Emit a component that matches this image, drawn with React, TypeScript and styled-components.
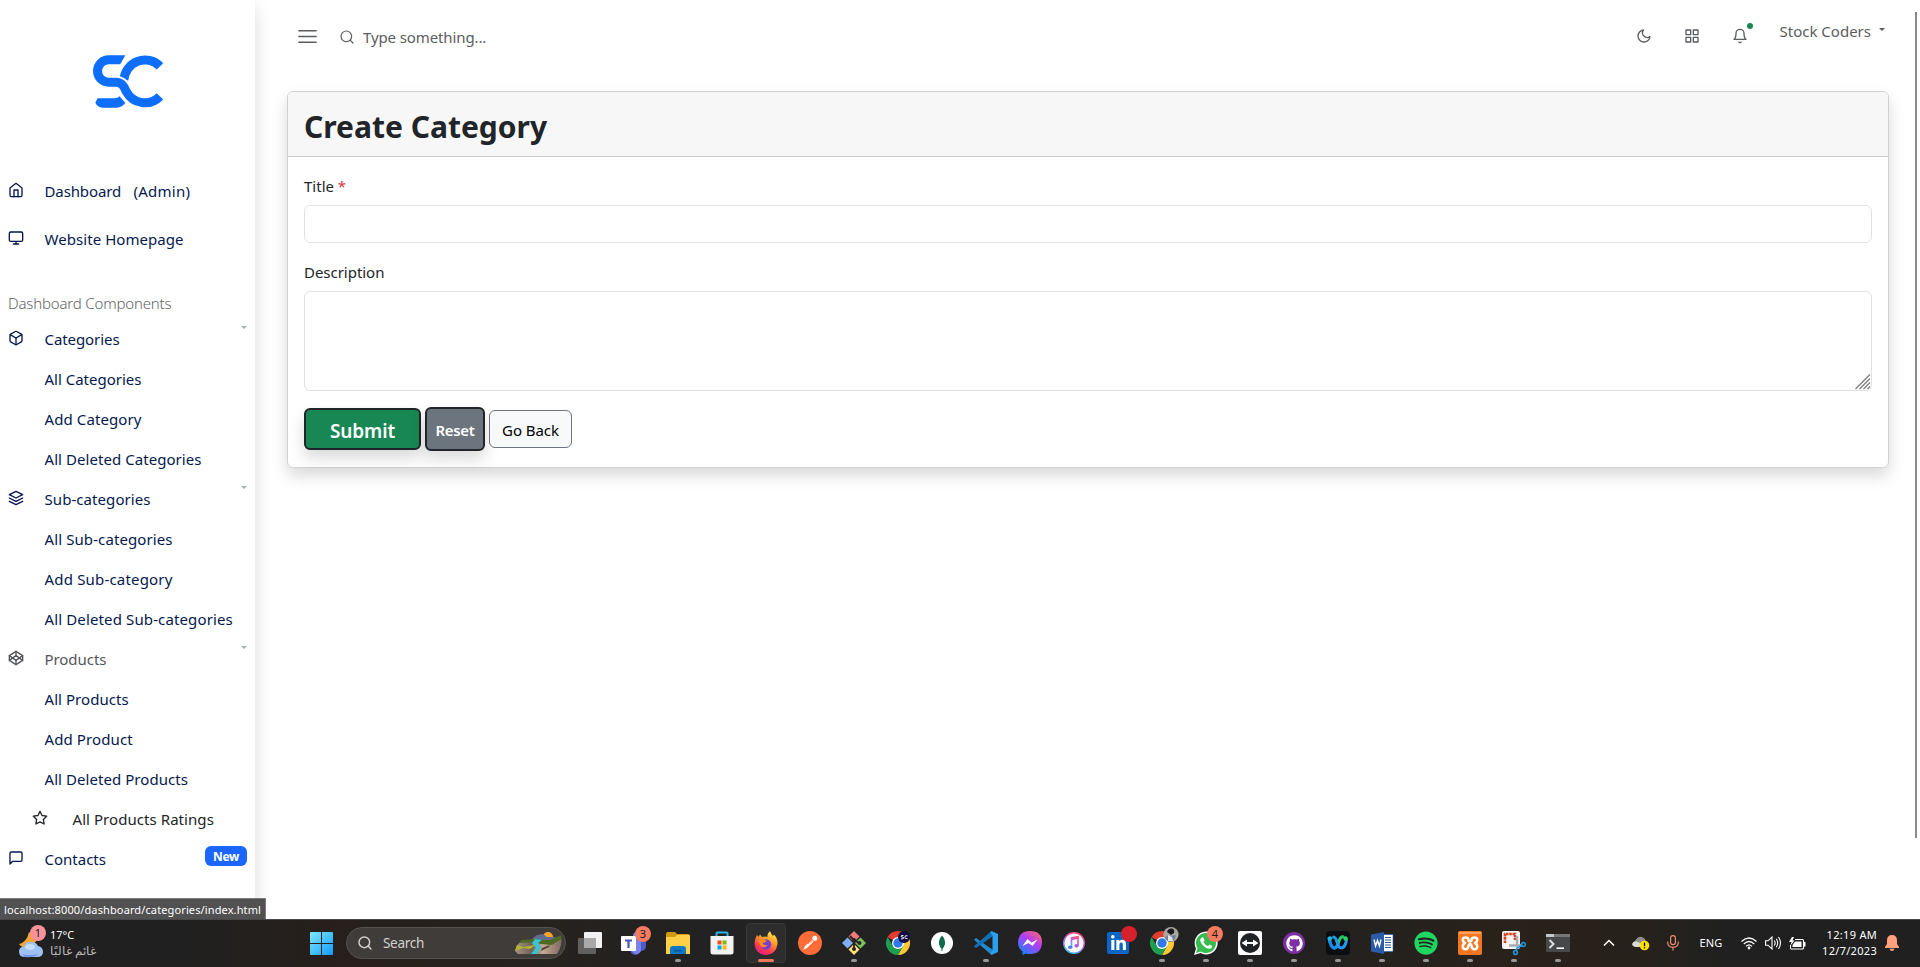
import React from 'react';
import styled, { createGlobalStyle, css } from 'styled-components';
import {
  FiBell, FiBox, FiCodepen, FiGrid, FiHome, FiLayers, FiMenu,
  FiMessageSquare, FiMonitor, FiMoon, FiSearch, FiStar,
} from 'react-icons/fi';
import { FaGithub, FaSpotify, FaLinkedinIn } from 'react-icons/fa';

const GlobalStyle = createGlobalStyle`
  * { box-sizing: border-box; }
  html, body { margin: 0; padding: 0; overflow: hidden; background: #fff; }
  body { font-family: "Noto Sans", "Open Sans", sans-serif; font-size: 15px; line-height: 24px; color: #212529; }
  button, input, textarea { font-family: inherit; margin: 0; }
  svg { display: block; flex: none; }
`;

/* ---------- page shell ---------- */

const Screen = styled.div`
  position: relative;
  display: flex;
  flex-direction: column;
  width: 1920px;
  height: 967px;
  overflow: hidden;
`;

const Page = styled.div`
  flex: 1;
  display: flex;
  min-height: 0;
  overflow: hidden;
`;

const Sidebar = styled.nav`
  width: 255px;
  flex: none;
  background: #fff;
  box-shadow: 0 8px 16px rgba(0, 0, 0, 0.15);
`;

const LogoBox = styled.div`
  height: 167px;
  padding: 54px 0 0 92px;
`;

const Text = styled.span<{ $ls?: number }>`
  letter-spacing: ${(p) => p.$ls ?? 0}px;
  white-space: pre;
`;

const NavRow = styled.a<{ $tall?: boolean; $tone?: 'muted' | 'dark'; $inset?: boolean }>`
  display: flex;
  align-items: center;
  height: ${(p) => (p.$tall ? 48 : 40)}px;
  padding-left: ${(p) => (p.$inset ? 32 : 8)}px;
  padding-right: 8px;
  color: ${(p) => (p.$tone === 'muted' ? '#55565a' : p.$tone === 'dark' ? '#222529' : '#05194f')};
  text-decoration: none;
`;

const NavIcon = styled.span<{ $wide?: boolean }>`
  width: ${(p) => (p.$wide ? 40.5 : 36.5)}px;
  flex: none;
  margin-top: -2px;
`;

const SectionLabel = styled.div`
  margin-top: 28px;
  height: 28px;
  padding-left: 8px;
  font-weight: 300;
  color: #5f6266;
`;

const Caret = styled.i<{ $color: string }>`
  display: block;
  border: 3px solid transparent;
  border-top-color: ${(p) => p.$color};
  border-bottom: 0;
`;

const RowCaret = styled(Caret)`
  align-self: flex-start;
  margin: 7px 0 0 auto;
`;

const NewBadge = styled.span`
  margin: -7px 0 0 auto;
  width: 42px;
  height: 20px;
  border-radius: 6px;
  background: #1a66ff;
  color: #fff;
  font-size: 12px;
  font-weight: 700;
  line-height: 21px;
  letter-spacing: -0.3px;
  text-align: center;
`;

const Main = styled.main`
  flex: 1;
  padding: 0 31px 0 32px;
`;

const TopBar = styled.header`
  display: flex;
  align-items: center;
  height: 73px;
  margin-bottom: 18px;
  padding: 0 4px 0 9px;
  color: #5a5d60;
`;

const SearchField = styled.label`
  display: flex;
  align-items: center;
  gap: 8px;
  margin-left: 20px;
  flex: 1;
`;

const TopActions = styled.div`
  display: flex;
  align-items: center;
  gap: 32px;
  padding-bottom: 1px;
`;

const BellBox = styled.span`
  position: relative;
`;

const BellDot = styled.i`
  position: absolute;
  right: -5px;
  top: -5px;
  width: 6px;
  height: 6px;
  border-radius: 50%;
  background: #198754;
`;

const UserMenu = styled.div`
  display: flex;
  align-items: center;
  gap: 8px;
  margin-left: 32px;
  padding-bottom: 11px;
`;

const UserCaret = styled(Caret)`
  margin-top: -4px;
`;

/* ---------- form card ---------- */

const Card = styled.section`
  border: 1px solid #cfd0d1;
  border-radius: 6px;
  background: #fff;
  box-shadow: 0 8px 16px rgba(0, 0, 0, 0.15);
`;

const CardHeader = styled.h1`
  margin: 0;
  height: 65px;
  padding: 5px 16px 0;
  border-bottom: 1px solid #cacbcc;
  border-radius: 5px 5px 0 0;
  background: #f7f7f7;
  font-size: 30px;
  font-weight: 700;
  line-height: 60px;
`;

const CardBody = styled.form`
  padding: 16px;
`;

const Field = styled.div`
  position: relative;
  margin-bottom: 16px;
`;

const FieldLabel = styled.label`
  display: block;
  height: 24px;
  margin-bottom: 8px;
  line-height: 26px;
`;

const Required = styled.span`
  color: #dc3545;
`;

const control = css`
  display: block;
  width: 100%;
  border: 1px solid #dee2e6;
  border-radius: 6px;
  background: #fff;
  outline: none;
  resize: none;
`;

const Input = styled.input`
  ${control}
  height: 38px;
`;

const TextArea = styled.textarea`
  ${control}
  height: 100px;
`;

const ResizeGrip = styled.svg`
  position: absolute;
  right: 1px;
  bottom: 1px;
`;

const ButtonRow = styled.div`
  display: flex;
  align-items: center;
  gap: 4px;
  height: 44px;
`;

const kinds = {
  submit: css`
    width: 117px; height: 42px; padding-top: 3px; border: 2px solid #212529; background: #198754; color: #fff;
    font-size: 19px; font-weight: 600; letter-spacing: -0.1px;
    box-shadow: 0 8px 16px rgba(0, 0, 0, 0.15);
  `,
  reset: css`
    width: 60px; height: 44px; border: 2px solid #212529; background: #6c757d; color: #fff;
    font-size: 15px; font-weight: 600; letter-spacing: -0.35px; padding-top: 1px;
    box-shadow: 0 8px 16px rgba(0, 0, 0, 0.15);
  `,
  back: css`
    width: 83px; height: 38px; border: 1px solid #6c757d; background: #f8f9fa; color: #000;
    font-size: 15px; letter-spacing: -0.04px; padding-top: 2px;
  `,
};

const Button = styled.button<{ $kind: keyof typeof kinds }>`
  padding: 0;
  border-radius: 6px;
  ${(p) => kinds[p.$kind]}
`;

/* ---------- browser overlays ---------- */

const ScrollThumb = styled.div`
  position: absolute;
  top: 12px;
  right: 3px;
  width: 2px;
  height: 826px;
  background: #8a8a8a;
`;

const StatusTip = styled.div`
  position: absolute;
  left: 0;
  top: 898px;
  width: 266px;
  height: 21px;
  padding-left: 4px;
  border: solid #7b7b7b;
  border-width: 1px 1px 0 0;
  background: #515151;
  color: #fff;
  font-size: 11px;
  line-height: 22px;
  letter-spacing: 0.12px;
  white-space: nowrap;
`;

/* ---------- taskbar ---------- */

const TaskBar = styled.footer`
  display: flex;
  align-items: center;
  height: 48px;
  flex: none;
  padding-bottom: 1px;
  border-top: 1px solid #474747;
  background: linear-gradient(90deg, #202020 0, #202020 9%, #261f1b 17%, #27221d 27%, #222 36%, #212121 66%, #29221b 78%, #27211b 85%, #202020 90%, #202020 100%);
  color: #fff;
`;

const Weather = styled.div`
  display: flex;
  width: 304px;
  padding-left: 18px;
  gap: 5px;
`;

const WeatherText = styled.div`
  display: flex;
  flex-direction: column;
  align-items: flex-start;
  font-size: 11px;
  line-height: 16px;
`;

const Faint = styled.span`
  color: #b9b9b9;
  font-size: 11.5px;
`;

const StartButton = styled.div`
  width: 42px;
  padding-left: 6px;
`;

const SearchPill = styled.div`
  display: flex;
  align-items: center;
  width: 220px;
  height: 32px;
  margin-right: 2px;
  padding: 0 2px 0 10px;
  gap: 10px;
  border: 1px solid #55514e;
  border-radius: 16px;
  background: #403c39;
  color: #d3d1cf;
  font-size: 13.5px;
`;

const SearchArt = styled.svg`
  margin-left: auto;
`;

const AppSlot = styled.div<{ $active?: boolean }>`
  position: relative;
  display: flex;
  align-items: center;
  justify-content: center;
  width: 44px;
  height: 44px;
  &::before {
    content: '';
    display: ${(p) => (p.$active ? 'block' : 'none')};
    position: absolute;
    inset: 2px;
    border: 1px solid #383838;
    border-radius: 4px;
    background: #2d2d2d;
  }
  svg { position: relative; overflow: visible; }
`;

const Running = styled.i<{ $active?: boolean }>`
  position: absolute;
  left: 50%;
  bottom: 3px;
  width: ${(p) => (p.$active ? 16 : 6)}px;
  height: 3px;
  transform: translateX(-50%);
  border-radius: 2px;
  background: ${(p) => (p.$active ? '#f0795a' : '#989898')};
`;

const CountBadge = styled.b<{ $color?: string; $plain?: boolean }>`
  position: absolute;
  right: ${(p) => (p.$plain ? 3 : 5)}px;
  top: 5px;
  width: 16px;
  height: 16px;
  border-radius: 50%;
  background: ${(p) => p.$color ?? '#f67b60'};
  color: #1c1c1c;
  font-size: 11px;
  font-weight: 400;
  line-height: 16px;
  text-align: center;
`;

const WeatherBadge = styled(CountBadge)`
  right: -1px;
  top: -2px;
`;

const WeatherIcon = styled.div`
  position: relative;
  width: 27px;
  padding-top: 3px;
`;

const Tray = styled.div`
  display: flex;
  align-items: center;
  flex: 1;
  padding-left: 23px;
  font-size: 11px;
`;

const TraySlot = styled.span<{ $w: number }>`
  display: flex;
  justify-content: center;
  flex: none;
  width: ${(p) => p.$w}px;
  letter-spacing: 0.17px;
`;

const Clock = styled.div`
  display: flex;
  flex-direction: column;
  align-items: flex-end;
  width: 74px;
  font-size: 11px;
  line-height: 16px;
  letter-spacing: 0.3px;
`;

/* ---------- drawings ---------- */

const Logo = () => (
  <svg width="72" height="54" viewBox="21 11 216 162" fill="none" stroke="#0d6efd" strokeWidth="27">
    <path d="M225 48A63.500 64.500 0 0 0 116.500 90" />
    <path d="M38 144H88Q98 144 104 138L121 158Q110 172 94 172H52Q38 171 31 157Z" fill="#0d6efd" stroke="none" />
    <path d="M80 95.500H92C110 95.500 117 107 124 124A64.500 64.500 0 0 0 150 150" stroke="#fff" strokeWidth="38" />
    <path d="M97 28.500H71A33.500 33.500 0 0 0 71 95.500H92C110 95.500 117 107 124 124A63.500 64.500 0 0 0 225 138" />
    <path d="M96 42V15H121L108 38Q106 42 103 42Z" fill="#0d6efd" stroke="none" />
  </svg>
);

const SunCloud = () => (
  <svg width="27" height="28" viewBox="0 0 27 28">
    <path d="M11 2Q9 12 1 14Q4 19 12 18L20 9Z" fill="#f2a531" />
    <path d="M7 27Q1 27 1 21.500Q1 17 6 16.500Q8 11 14 12Q18 12 20 16Q25 17 25 22Q25 27 19 27Z" fill="#9fc0f3" />
    <path d="M4 24Q9 26 21 24Q16 28 7 27Z" fill="#6f98e6" />
    <ellipse cx="12" cy="17" rx="5" ry="3" fill="#c8dcfb" />
  </svg>
);

const Start = () => (
  <svg width="23" height="23" viewBox="0 0 23 23">
    <defs><linearGradient id="win" x2="1" y2="1"><stop stopColor="#7fe9ff" /><stop offset="1" stopColor="#119bff" /></linearGradient></defs>
    <path d="M0 1Q0 0 1 0H11V11H0ZM12 0H22Q23 0 23 1V11H12ZM0 12H11V23H1Q0 23 0 22ZM12 12H23V22Q23 23 22 23H12Z" fill="url(#win)" />
  </svg>
);

const Landscape = () => (
  <SearchArt width="49" height="24" viewBox="0 0 49 24">
    <defs>
      <linearGradient id="cliff" x2="1" y2="0"><stop stopColor="#a89486" /><stop offset=".35" stopColor="#6f6158" /><stop offset=".6" stopColor="#c7a895" /><stop offset="1" stopColor="#7d6a60" /></linearGradient>
    </defs>
    <circle cx="34" cy="6" r="5" fill="#f9a72b" />
    <path d="M18 8L23 4L29 3L33 6L42 6L36 12L18 12Z" fill="#626c91" />
    <path d="M1 20Q3 12 8 10L22 8L36 12L47 5Q49 14 43 23H4Z" fill="url(#cliff)" />
    <path d="M7 9L20 8L26 9L36 9L47 4V8L38 14L27 13L20 11L6 12Z" fill="#4f6a22" />
    <path d="M21 8L28 9L24 12L27 16L23 23H17L22 17L18 12Z" fill="#36c6d3" />
    <path d="M3 14L9 16L21 14L16 18L9 17L1 20Z" fill="#b4b52c" />
    <path d="M28 17L36 14L35 16L27 20Z" fill="#53452f" />
  </SearchArt>
);

const TaskView = () => (
  <svg width="24" height="22" viewBox="0 0 24 22">
    <rect x="6" width="18" height="16" rx="1" fill="#f1f1f1" />
    <rect y="6" width="18" height="16" rx="1" fill="#606060" />
    <path d="M6 6H18V16H6Z" fill="#a9a9a9" />
  </svg>
);

const Teams = () => (
  <svg width="26" height="24" viewBox="0 0 26 24">
    <circle cx="16" cy="5" r="4" fill="#7b83eb" />
    <path d="M10 9H25V16Q24 20 20 20Q18 24 14 24Q9 23 9 18Z" fill="#5059c9" />
    <path d="M10 8H20V19Q19 23 15 23Q11 22 10 18Z" fill="#7b83eb" />
    <rect y="5" width="15" height="15" rx="1" fill="#fff" />
    <path d="M4 8.500H11V10.500H8.600V17H6.400V10.500H4Z" fill="#4b53bc" />
  </svg>
);

const Explorer = () => (
  <svg width="24" height="22" viewBox="0 0 24 22">
    <path d="M0 2Q0 0 2 0H9L11 2H22Q24 2 24 4V9H0Z" fill="#d49a0d" />
    <path d="M0 5H9L11 3H23Q24 3 24 5V22H0Z" fill="#ffcf45" />
    <path d="M4 22V17Q4 14 7 14H17Q20 14 20 17V22Z" fill="#1079c6" />
    <path d="M8 18H16V19.500H8Z" fill="#0b5797" />
  </svg>
);

const Store = () => (
  <svg width="24" height="24" viewBox="0 0 24 24">
    <path d="M6.500 5V2.500Q6.500 1.500 7.500 1.500H16.500Q17.500 1.500 17.500 2.500V5" fill="none" stroke="#2bb3ea" strokeWidth="2" />
    <path d="M.500 5H23.500V21Q23.500 23.500 21 23.500H3Q.500 23.500 .500 21Z" fill="#f2f2f2" />
    <path d="M7.500 9.500H11.500V13.500H7.500Z" fill="#f25022" /><path d="M12.500 9.500H16.500V13.500H12.500Z" fill="#7fba00" />
    <path d="M7.500 14.500H11.500V18.500H7.500Z" fill="#00a4ef" /><path d="M12.500 14.500H16.500V18.500H12.500Z" fill="#ffb900" />
  </svg>
);

const Firefox = () => (
  <svg width="24" height="24" viewBox="0 0 24 24">
    <defs><linearGradient id="fx" x1=".8" y1="0" x2=".3" y2="1"><stop stopColor="#fff04a" /><stop offset=".4" stopColor="#ff9a2c" /><stop offset=".75" stopColor="#ff3750" /><stop offset="1" stopColor="#e21e86" /></linearGradient></defs>
    <path d="M16 0Q17 3 19 5L20 3.500Q24 8 23.500 13Q22 23.500 12 24Q1.500 23.500 .500 13Q.500 8 3 4L4.500 6L6 3.500L8 6Q12 5 13.500 6Q13 3 16 0Z" fill="url(#fx)" />
    <circle cx="12" cy="13.500" r="5.200" fill="#7a3fd0" />
    <path d="M4 9Q9 7 13 10Q11 12 8.500 12Q10 15 14 14Q10 18 6.500 15Z" fill="#ff8a22" />
  </svg>
);

const Postman = () => (
  <svg width="24" height="24" viewBox="0 0 24 24">
    <circle cx="12" cy="12" r="12" fill="#ff6c37" />
    <path d="M5 19L7 15L14 9L15.500 10.500L9 17Z" fill="#fff" />
    <circle cx="16.800" cy="7.200" r="2.500" fill="#fff" />
    <path d="M10 13L14 10" stroke="#ff6c37" strokeWidth=".7" />
  </svg>
);

const Git = () => (
  <svg width="24" height="24" viewBox="0 0 24 24">
    <path d="M12 0L17.500 5.500L12 11L6.500 5.500Z" fill="#f1797b" />
    <path d="M18.500 6.500L24 12L18.500 17.500L13 12Z" fill="#7ec45d" />
    <path d="M12 13L17.500 18.500L12 24L6.500 18.500Z" fill="#ffe27a" />
    <path d="M5.500 6.500L11 12L5.500 17.500L0 12Z" fill="#7fb0f7" />
    <path d="M8 5L12 9V18M12 9L17 12" fill="none" stroke="#2b2320" strokeWidth="1.800" />
    <circle cx="12" cy="9" r="2" fill="#2b2320" /><circle cx="12" cy="18" r="2" fill="#2b2320" /><circle cx="17.500" cy="12" r="2" fill="#2b2320" />
  </svg>
);

const Chrome = ({ avatar }: { avatar?: boolean }) => (
  <svg width="24" height="24" viewBox="0 0 24 24">
    <path d="M12 12L1.600 6A12 12 0 0 1 22.400 6Z" fill="#e33b2e" />
    <path d="M12 12L22.400 6A12 12 0 0 1 12 24L17 15Z" fill="#fcc934" />
    <path d="M12 12L17 15L12 24A12 12 0 0 1 1.600 6L7 15Z" fill="#1e9e4f" />
    <path d="M12 6H22.400L17 15Z" fill="#fcc934" />
    <circle cx="12" cy="12" r="6" fill="#fff" />
    <circle cx="12" cy="12" r="4.700" fill="#3079ec" />
    {avatar ? (
      <>
        <circle cx="21" cy="3.500" r="7.600" fill="#aaa79f" />
        <path d="M17 1Q18 -3 22 -2.500Q25 -2 24 2L21 4Z" fill="#1a1b20" />
        <path d="M15 7Q17 3 20 5L26 4Q25 10 20 11Q17 10 15 7Z" fill="#6f7f98" />
        <path d="M18 4L22 6L23 10H18Z" fill="#dfe6ee" />
      </>
    ) : (
      <>
        <circle cx="18" cy="6" r="6" fill="#120c45" />
        <path d="M17.500 4.500H15.500Q14.500 6 16 6H17Q18.500 7.500 17 7.800H15M21.500 4.800Q18.800 4 18.800 6.200Q19 8.300 21.500 7.500" fill="none" stroke="#fff" strokeWidth=".9" />
      </>
    )}
  </svg>
);

const Mongo = () => (
  <svg width="22" height="22" viewBox="0 0 22 22">
    <circle cx="11" cy="11" r="11" fill="#fff" />
    <path d="M11 3.500Q14.500 7.500 14 12Q13.500 15 11 17Q8.500 15 8 12Q7.500 7.500 11 3.500Z" fill="#0e6b4d" />
    <path d="M11 15V19" stroke="#0e6b4d" />
  </svg>
);

const Code = () => (
  <svg width="24" height="24" viewBox="0 0 24 24">
    <path d="M0 8.700L2 7L19 19V21L17.500 24Z" fill="#1f8ad2" />
    <path d="M0 15.300L2 17L19 5V3L17.500 0Z" fill="#0f72b8" />
    <path d="M17.500 0L24 3V21L17.500 24L16.500 22L18.500 20V4L16.500 2Z" fill="#2ba0ee" />
  </svg>
);

const Messenger = () => (
  <svg width="24" height="24" viewBox="0 0 24 24">
    <defs><linearGradient id="ms" x1=".9" y1="0" x2=".2" y2="1"><stop stopColor="#ff6968" /><stop offset=".45" stopColor="#b23cf5" /><stop offset="1" stopColor="#1187ff" /></linearGradient></defs>
    <path d="M12 0Q24 0 24 11.500Q23.500 23 12 23Q9.500 23 8 22.500L4.500 24V20.500Q0 17 0 11.500Q.500 0 12 0Z" fill="url(#ms)" />
    <path d="M4.500 15L9.500 8L13.500 11.500L19.500 8.500L14.500 15L10.500 12Z" fill="#fff" />
  </svg>
);

const ITunes = () => (
  <svg width="22" height="22" viewBox="0 0 22 22">
    <defs><linearGradient id="it" x1=".7" y1="0" x2=".3" y2="1"><stop stopColor="#ff4f7b" /><stop offset=".5" stopColor="#b55bf0" /><stop offset="1" stopColor="#2fc4fb" /></linearGradient></defs>
    <circle cx="11" cy="11" r="10.300" fill="#f7f7fa" stroke="url(#it)" strokeWidth="1.400" />
    <path d="M8.500 15V6L15 4.700V13.500M8.500 7.500L15 6" fill="none" stroke="url(#it)" strokeWidth="1.600" />
    <ellipse cx="7.200" cy="15.200" rx="2.200" ry="1.700" fill="#547be8" /><ellipse cx="13.600" cy="13.700" rx="2.200" ry="1.700" fill="#a15be8" />
  </svg>
);

const IconTile = styled.span<{ $bg: string; $size: number; $radius: string }>`
  position: relative;
  display: flex;
  align-items: center;
  justify-content: center;
  width: ${(p) => p.$size}px;
  height: ${(p) => p.$size}px;
  border-radius: ${(p) => p.$radius};
  background: ${(p) => p.$bg};
  color: #fff;
`;

const WhatsAppBubble = () => (
  <svg width="24" height="24" viewBox="0 0 24 24">
    <path d="M12 .500A11.500 11.500 0 1 1 6.500 22L0 24L2 17.500A11.500 11.500 0 0 1 12 .500Z" fill="#fff" />
    <path d="M12 2A10 10 0 1 1 6.800 20.500L2 22L3.500 17.200A10 10 0 0 1 12 2Z" fill="#36bd50" />
    <path d="M8 6.500Q9.500 5.800 10 8L10.500 9.500L9.300 11Q11 14 14 15L15.500 13.500L18 14.700Q18 17.500 15.500 17.700Q12 17.800 9 14.500Q6 11 6.200 9Q6.600 7 8 6.500Z" fill="#fff" />
  </svg>
);

const TeamViewer = () => (
  <svg width="24" height="24" viewBox="0 0 24 24">
    <rect width="24" height="24" rx="2" fill="#fff" /><circle cx="12" cy="12" r="10" fill="#202226" />
    <path d="M3.500 12L9 8.500V11H15V8.500L20.500 12L15 15.500V13H9V15.500Z" fill="#fff" />
  </svg>
);

const Webex = () => (
  <svg width="24" height="24" viewBox="0 0 24 24">
    <rect width="24" height="24" rx="4" fill="#0c0d0f" />
    <path d="M3.200 7.500Q5 17 8.500 17Q11.500 16.500 13 10Q14.500 5.500 17 5.800" fill="none" stroke="#27c46f" strokeWidth="3" strokeLinecap="round" />
    <path d="M3 7.500Q4.500 17 8.500 17Q10.500 16.800 11.500 14" fill="none" stroke="#1689f6" strokeWidth="3" strokeLinecap="round" />
    <path d="M7.500 6Q9.500 6 11 11Q12.500 17 15.500 17Q19.500 16 20.500 9" fill="none" stroke="#2299f0" strokeWidth="3" strokeLinecap="round" />
    <circle cx="19.500" cy="7.500" r="2.200" fill="#27d467" /><circle cx="4" cy="7.500" r="2.200" fill="#1fb8d8" />
  </svg>
);

const Word = () => (
  <svg width="22" height="22" viewBox="0 0 22 22">
    <rect x="11" y="2.500" width="11" height="17" fill="#fff" stroke="#2b579a" strokeWidth=".6" />
    <path d="M14 5.500H20M14 8H20M14 10.500H20M14 13H20M14 15.500H20" stroke="#2b579a" />
    <path d="M0 2.500L13 0V22L0 19.500Z" fill="#2b5ba8" />
    <path d="M3 7.500L4.600 14L6.500 8.500L8.400 14L10 7.500" fill="none" stroke="#fff" strokeWidth="1.400" />
  </svg>
);

const Xampp = () => (
  <svg width="24" height="24" viewBox="0 0 24 24">
    <rect width="24" height="24" rx="2" fill="#f37623" /><path d="M1 1H23V3H1Z" fill="#f9a15d" />
    <path d="M10.500 9.500Q10.500 6.500 7.500 6.500Q4.500 6.500 4.800 9Q5 11 7 12Q4.500 13.500 4.800 16Q5 18.300 7.500 18.300Q10 18.300 10.500 14.500Q12 11.500 13.500 14.500Q13.800 18.300 16.500 18.300Q19 18.300 19.200 16Q19.500 13.500 17 12Q19 11 19.200 9Q19.500 6.500 16.500 6.500Q13.500 6.500 13.500 9.500Q12 11 10.500 9.500Z" fill="none" stroke="#fff" strokeWidth="2.600" strokeLinejoin="round" />
  </svg>
);

const Snip = () => (
  <svg width="24" height="24" viewBox="0 0 24 24">
    <rect width="18" height="18" rx="2" fill="#f3f3f3" />
    <path d="M3 12V3H13V9" fill="none" stroke="#d8431f" strokeWidth="2.600" strokeDasharray="2.600 .7" />
    <path d="M15 5V16M7 14.500H19" stroke="#a9adb1" strokeWidth="2.400" />
    <circle cx="21.500" cy="13.500" r="1.900" fill="none" stroke="#1d9ce5" strokeWidth="1.500" />
    <circle cx="13.500" cy="21.500" r="1.900" fill="none" stroke="#1d9ce5" strokeWidth="1.500" />
    <path d="M20 14.500L15 17L14 20" fill="none" stroke="#1d9ce5" strokeWidth="1.500" />
  </svg>
);

const Terminal = () => (
  <svg width="24" height="18" viewBox="0 0 24 18">
    <rect width="24" height="18" rx="1" fill="#46484a" /><path d="M0 0H24V3H0Z" fill="#777" /><path d="M0 0H8V3H0Z" fill="#c8c8c8" />
    <path d="M3.500 6L7.500 10L3.500 14" fill="none" stroke="#dedede" strokeWidth="2" /><path d="M10.500 14.200H18" stroke="#fff" strokeWidth="1.600" />
  </svg>
);

/* ---------- data ---------- */

type NavItem = { label: string; ls: number; icon?: React.ReactNode; caret?: boolean; tone?: 'muted' | 'dark'; inset?: boolean; badge?: string };

const navItems: NavItem[] = [
  { label: 'Categories', ls: -0.08, icon: <FiBox size={16} />, caret: true },
  { label: 'All Categories', ls: 0 },
  { label: 'Add Category', ls: 0.1 },
  { label: 'All Deleted Categories', ls: 0.06 },
  { label: 'Sub-categories', ls: 0.07, icon: <FiLayers size={16} />, caret: true },
  { label: 'All Sub-categories', ls: 0.1 },
  { label: 'Add Sub-category', ls: 0.18 },
  { label: 'All Deleted Sub-categories', ls: 0.13 },
  { label: 'Products', ls: -0.06, icon: <FiCodepen size={16} />, caret: true, tone: 'muted' },
  { label: 'All Products', ls: 0.06 },
  { label: 'Add Product', ls: 0.1 },
  { label: 'All Deleted Products', ls: 0.06 },
  { label: 'All Products Ratings', ls: 0.06, icon: <FiStar size={16} />, tone: 'dark', inset: true },
  { label: 'Contacts', ls: 0, icon: <FiMessageSquare size={16} />, badge: 'New' },
];

type TaskApp = { name: string; icon: React.ReactNode; running?: boolean; active?: boolean; badge?: string; dot?: boolean };

const apps: TaskApp[] = [
  { name: 'taskview', icon: <TaskView /> },
  { name: 'teams', icon: <Teams />, badge: '3' },
  { name: 'explorer', icon: <Explorer />, running: true },
  { name: 'store', icon: <Store /> },
  { name: 'firefox', icon: <Firefox />, running: true, active: true },
  { name: 'postman', icon: <Postman /> },
  { name: 'git', icon: <Git />, running: true },
  { name: 'chrome', icon: <Chrome /> },
  { name: 'mongo', icon: <Mongo /> },
  { name: 'code', icon: <Code />, running: true },
  { name: 'messenger', icon: <Messenger /> },
  { name: 'itunes', icon: <ITunes /> },
  { name: 'linkedin', icon: <IconTile $bg="#0b66c3" $size={22} $radius="2px"><FaLinkedinIn size={17} /></IconTile>, dot: true },
  { name: 'chrome-profile', icon: <Chrome avatar />, running: true },
  { name: 'whatsapp', icon: <WhatsAppBubble />, running: true, badge: '4' },
  { name: 'teamviewer', icon: <TeamViewer />, running: true },
  { name: 'github', icon: <IconTile $bg="#7f2fa6" $size={22} $radius="50%"><FaGithub size={17} /></IconTile>, running: true },
  { name: 'webex', icon: <Webex />, running: true },
  { name: 'word', icon: <Word />, running: true },
  { name: 'spotify', icon: <FaSpotify size={24} color="#1ed760" />, running: true },
  { name: 'xampp', icon: <Xampp />, running: true },
  { name: 'snip', icon: <Snip />, running: true },
  { name: 'terminal', icon: <Terminal />, running: true },
];

export default function App() {
  return (
    <Screen>
      <GlobalStyle />
      <Page>
        <Sidebar>
          <LogoBox><Logo /></LogoBox>
          <NavRow $tall>
            <NavIcon><FiHome size={16} /></NavIcon>
            <Text $ls={-0.12}>Dashboard</Text>
            <Text $ls={0.25}>{'   (Admin)'}</Text>
          </NavRow>
          <NavRow $tall>
            <NavIcon><FiMonitor size={16} /></NavIcon>
            <Text $ls={0.06}>Website Homepage</Text>
          </NavRow>
          <SectionLabel><Text $ls={-0.17}>Dashboard Components</Text></SectionLabel>
          {navItems.map((n) => (
            <NavRow key={n.label} $tone={n.tone} $inset={n.inset}>
              <NavIcon $wide={n.inset}>{n.icon}</NavIcon>
              <Text $ls={n.ls}>{n.label}</Text>
              {n.caret && <RowCaret $color="#a9b0b8" />}
              {n.badge && <NewBadge>{n.badge}</NewBadge>}
            </NavRow>
          ))}
        </Sidebar>
        <Main>
          <TopBar>
            <FiMenu size={23} strokeWidth={1.6} />
            <SearchField>
              <FiSearch size={16} strokeWidth={1.8} />
              <Text $ls={-0.11}>Type something...</Text>
            </SearchField>
            <TopActions>
              <FiMoon size={16} />
              <FiGrid size={16} />
              <BellBox><FiBell size={16} /><BellDot /></BellBox>
            </TopActions>
            <UserMenu>
              <Text>Stock Coders</Text>
              <UserCaret $color="#5a5d60" />
            </UserMenu>
          </TopBar>
          <Card>
            <CardHeader>Create Category</CardHeader>
            <CardBody>
              <Field>
                <FieldLabel>Title <Required>*</Required></FieldLabel>
                <Input />
              </Field>
              <Field>
                <FieldLabel><Text $ls={-0.03}>Description</Text></FieldLabel>
                <TextArea />
                <ResizeGrip width="16" height="16" viewBox="0 0 16 16" stroke="#7d7d7d" strokeWidth="1.300">
                  <path d="M.500 15L15 .500M4.500 15L15 4.500M8.500 15L15 8.500M12.500 15L15 12.500" />
                </ResizeGrip>
              </Field>
              <ButtonRow>
                <Button type="button" $kind="submit">Submit</Button>
                <Button type="button" $kind="reset">Reset</Button>
                <Button type="button" $kind="back">Go Back</Button>
              </ButtonRow>
            </CardBody>
          </Card>
        </Main>
      </Page>
      <ScrollThumb />
      <StatusTip>localhost:8000/dashboard/categories/index.html</StatusTip>
      <TaskBar>
        <Weather>
          <WeatherIcon><SunCloud /><WeatherBadge $color="#f9929b">1</WeatherBadge></WeatherIcon>
          <WeatherText><span>17°C</span><Faint dir="rtl">غائم غالبًا</Faint></WeatherText>
        </Weather>
        <StartButton><Start /></StartButton>
        <SearchPill>
          <FiSearch size={16} strokeWidth={2.2} />
          <Text $ls={-0.29}>Search</Text>
          <Landscape />
        </SearchPill>
        {apps.map((a) => (
          <AppSlot key={a.name} $active={a.active}>
            {a.icon}
            {a.running && <Running $active={a.active} />}
            {a.badge && <CountBadge>{a.badge}</CountBadge>}
            {a.dot && <CountBadge $color="#d6202b" $plain />}
          </AppSlot>
        ))}
        <Tray>
          <TraySlot $w={12}>
            <svg width="12" height="8" viewBox="0 0 12 8" fill="none" stroke="#fff" strokeWidth="1.500"><path d="M1 6.500L6 1.500L11 6.500" /></svg>
          </TraySlot>
          <TraySlot $w={52}>
            <svg width="18" height="15" viewBox="0 0 18 15">
              <path d="M2 10Q-1 7 3 5Q6 0 10 1Q13 2 14 5L10 10Z" fill="#8c8c8c" /><path d="M0 8Q2 4 6 6L10 8V11H3Q0 10 0 8Z" fill="#d9d9d9" />
              <circle cx="12.500" cy="9.500" r="4.800" fill="#ffe100" /><path d="M12.500 6.500V10.200M12.500 11.200V12.600" stroke="#000" strokeWidth="1.300" />
            </svg>
          </TraySlot>
          <TraySlot $w={12}>
            <svg width="12" height="16" viewBox="0 0 12 16" fill="none" stroke="#ec8d6d" strokeWidth="1.200"><rect x="3.600" y=".7" width="4.800" height="9" rx="2.400" /><path d="M.700 6.500V8Q1 12 6 12.300Q11 12 11.300 8V6.500M6 12.300V15.500" /></svg>
          </TraySlot>
          <TraySlot $w={64}>ENG</TraySlot>
          <TraySlot $w={12}>
            <svg width="16" height="13" viewBox="0 0 16 13" fill="none" stroke="#fff" strokeWidth="1.200"><path d="M.500 4.500Q8 -2.500 15.500 4.500M2.800 7Q8 2 13.200 7M5 9.300Q8 6.300 11 9.300" /><circle cx="8" cy="11" r="1.400" fill="#fff" stroke="none" /></svg>
          </TraySlot>
          <TraySlot $w={36}>
            <svg width="17" height="14" viewBox="0 0 17 14" fill="none" stroke="#fff" strokeWidth="1.100"><path d="M.600 4.800H3L7 1V13L3 9.200H.600ZM9.300 4.500Q11 7 9.300 9.500M11.300 2.800Q14 7 11.300 11.200M13.500 1Q17.500 7 13.500 13" /></svg>
          </TraySlot>
          <TraySlot $w={12}>
            <svg width="17" height="13" viewBox="0 0 17 13"><path d="M6 2.500H13.500Q14.500 2.500 14.500 3.500V11Q14.500 12 13.500 12H2.500Q1.500 12 1.500 11V8" fill="none" stroke="#fff" strokeWidth="1.100" /><path d="M6 4.500H12.500V10H3.500V8ZM15 5H16.500V9.500H15ZM3 0L0 5H2.500L1.500 8.500L5.500 3.500H3.500L5 0Z" fill="#fff" /></svg>
          </TraySlot>
          <Clock><span>12:19 AM</span><span>12/7/2023</span></Clock>
          <TraySlot $w={30}>
            <svg width="14" height="16" viewBox="0 0 14 16" fill="#ffa17f"><path d="M7 0Q12 0 12 5.500V9L14 12V13H0V12L2 9V5.500Q2 0 7 0ZM4.500 13.800H9.500Q9 16 7 16Q5 16 4.500 13.800Z" /></svg>
          </TraySlot>
        </Tray>
      </TaskBar>
    </Screen>
  );
}
